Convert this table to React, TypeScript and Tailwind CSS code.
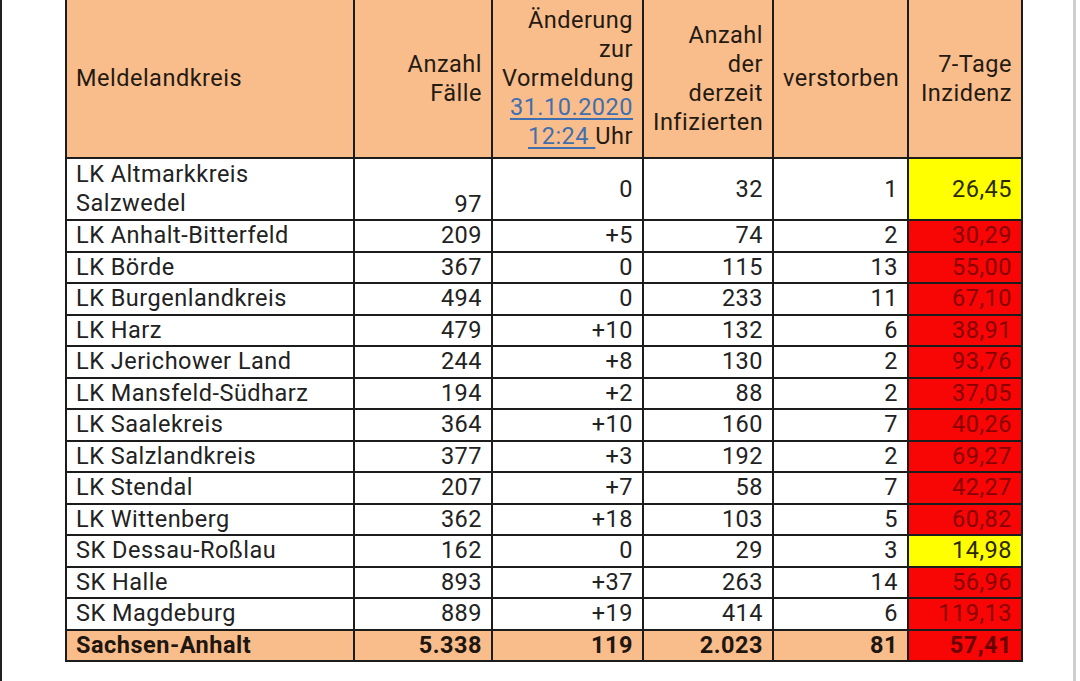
import React from "react";

type Row = { name: string; faelle: string; aend: string; inf: string; tot: string; inz: string; yellow?: boolean };

const rows: Row[] = [
  { name: "LK Anhalt-Bitterfeld", faelle: "209", aend: "+5", inf: "74", tot: "2", inz: "30,29" },
  { name: "LK Börde", faelle: "367", aend: "0", inf: "115", tot: "13", inz: "55,00" },
  { name: "LK Burgenlandkreis", faelle: "494", aend: "0", inf: "233", tot: "11", inz: "67,10" },
  { name: "LK Harz", faelle: "479", aend: "+10", inf: "132", tot: "6", inz: "38,91" },
  { name: "LK Jerichower Land", faelle: "244", aend: "+8", inf: "130", tot: "2", inz: "93,76" },
  { name: "LK Mansfeld-Südharz", faelle: "194", aend: "+2", inf: "88", tot: "2", inz: "37,05" },
  { name: "LK Saalekreis", faelle: "364", aend: "+10", inf: "160", tot: "7", inz: "40,26" },
  { name: "LK Salzlandkreis", faelle: "377", aend: "+3", inf: "192", tot: "2", inz: "69,27" },
  { name: "LK Stendal", faelle: "207", aend: "+7", inf: "58", tot: "7", inz: "42,27" },
  { name: "LK Wittenberg", faelle: "362", aend: "+18", inf: "103", tot: "5", inz: "60,82" },
  { name: "SK Dessau-Roßlau", faelle: "162", aend: "0", inf: "29", tot: "3", inz: "14,98", yellow: true },
  { name: "SK Halle", faelle: "893", aend: "+37", inf: "263", tot: "14", inz: "56,96" },
  { name: "SK Magdeburg", faelle: "889", aend: "+19", inf: "414", tot: "6", inz: "119,13" },
];

const b = "border-2 border-[#1c1c1c] px-[9px]";
const td = `${b} align-middle`;

export default function App() {
  return (
    <div
      className="w-[1080px] h-[681px] bg-white overflow-hidden flex"
      style={{ fontFamily: "Roboto, 'Noto Sans', sans-serif" }}
    >
      <div className="w-[2px] h-full bg-[#202020]" />
      <div className="flex-1 pl-[63px] pt-0">
        <table
          className="border-collapse table-fixed text-[23.5px] tracking-[0.5px] leading-[29px] text-[#222]"
          style={{ width: 956 }}
        >
          <colgroup>
            <col style={{ width: 288 }} />
            <col style={{ width: 138 }} />
            <col style={{ width: 151 }} />
            <col style={{ width: 130 }} />
            <col style={{ width: 135 }} />
            <col style={{ width: 114 }} />
          </colgroup>
          <thead>
            <tr className="h-[158px] bg-[#f9bd8c] text-[#231a12]">
              <th className={`${td} border-t-0 text-left font-normal`}>Meldelandkreis</th>
              <th className={`${td} border-t-0 text-right font-normal`}>
                Anzahl
                <br />
                Fälle
              </th>
              <th className={`${td} border-t-0 text-right font-normal`}>
                Änderung
                <br />
                zur
                <br />
                Vormeldung
                <br />
                <span className="text-[#3f6fae] underline decoration-[2px] underline-offset-[3px]">31.10.2020</span>
                <br />
                <span className="text-[#3f6fae] underline decoration-[2px] underline-offset-[3px]">12:24&nbsp;</span>Uhr
              </th>
              <th className={`${td} border-t-0 text-right font-normal`}>
                Anzahl
                <br />
                der
                <br />
                derzeit
                <br />
                Infizierten
              </th>
              <th className={`${td} border-t-0 text-right font-normal`}>verstorben</th>
              <th className={`${td} border-t-0 text-right font-normal`}>
                7-Tage
                <br />
                Inzidenz
              </th>
            </tr>
          </thead>
          <tbody>
            <tr className="h-[62px]">
              <td className={`${td} text-left`}>
                LK Altmarkkreis
                <br />
                Salzwedel
              </td>
              <td className={`${b} text-right align-bottom`}>97</td>
              <td className={`${td} text-right`}>0</td>
              <td className={`${td} text-right`}>32</td>
              <td className={`${td} text-right`}>1</td>
              <td className={`${td} text-right bg-[#ffff00] text-[#2a2a00]`}>26,45</td>
            </tr>
            {rows.map((r) => (
              <tr key={r.name} className="h-[31.5px]">
                <td className={`${td} text-left whitespace-nowrap`}>{r.name}</td>
                <td className={`${td} text-right`}>{r.faelle}</td>
                <td className={`${td} text-right`}>{r.aend}</td>
                <td className={`${td} text-right`}>{r.inf}</td>
                <td className={`${td} text-right`}>{r.tot}</td>
                <td
                  className={`${td} text-right ${
                    r.yellow ? "bg-[#ffff00] text-[#2a2a00]" : "bg-[#f80606] text-[#8a0000]"
                  }`}
                >
                  {r.inz}
                </td>
              </tr>
            ))}
            <tr className="h-[31.5px] bg-[#f9bd8c] font-bold text-[#1e1610]">
              <td className={`${td} text-left`}>Sachsen-Anhalt</td>
              <td className={`${td} text-right`}>5.338</td>
              <td className={`${td} text-right`}>119</td>
              <td className={`${td} text-right`}>2.023</td>
              <td className={`${td} text-right`}>81</td>
              <td className={`${td} text-right bg-[#f80606] text-[#6a0000]`}>57,41</td>
            </tr>
          </tbody>
        </table>
      </div>
      <div className="w-[3px] h-full bg-[#cfcfcf]" />
      <div className="w-[4px] h-full bg-white" />
    </div>
  );
}
